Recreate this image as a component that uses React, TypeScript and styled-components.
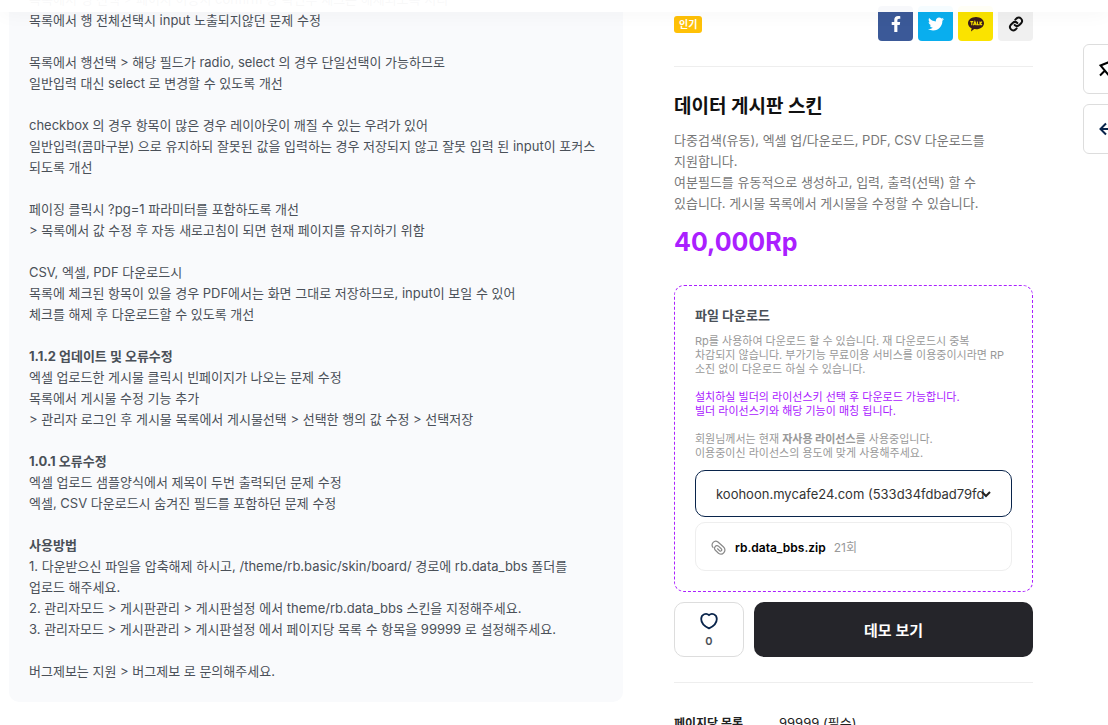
import React from "react";
import styled, { createGlobalStyle, css } from "styled-components";
import { FaFacebookF, FaTwitter } from "react-icons/fa";

const GlobalStyle = createGlobalStyle`
  * { box-sizing: border-box; }
  body {
    margin: 0;
    background: #fff;
    color: #4a5058;
    font-family: Inter, "Noto Sans CJK KR", sans-serif;
    font-size: 13px;
    line-height: 21px;
    overflow: hidden;
    word-break: keep-all;
  }
  button, select { font-family: inherit; }
  p, h1, h2, h3 { margin: 0; }
`;

const Header = styled.header`
  position: fixed;
  top: 0;
  left: 0;
  right: 0;
  height: 12px;
  z-index: 5;
  background: rgba(255, 255, 255, 0.96);
  box-shadow: 0 0 20px rgba(0, 0, 0, 0.05);
`;

const Page = styled.div`
  display: grid;
  grid-template-columns: 614fr 359fr;
  align-items: start;
  column-gap: 51px;
  margin-top: -11px;
  padding: 0 75px 0 9px;
`;

const Article = styled.article`
  background: #f9fafc;
  border-radius: 0 0 10px 10px;
  padding: 0 20px 20px;
`;

const Paragraph = styled.p`
  margin-bottom: 21px;
  &:last-child { margin-bottom: 0; }
`;

const Aside = styled.aside`
  padding-top: 17px;
`;

const TopRow = styled.div`
  display: flex;
  justify-content: space-between;
  align-items: flex-start;
  padding-bottom: 25px;
  border-bottom: 1px solid #eee;
`;

const Badge = styled.span`
  margin-top: 10px;
  padding: 0 5px;
  border-radius: 3px;
  background: #ffc107;
  color: #fff;
  font-size: 10px;
  font-weight: 600;
  line-height: 17px;
`;

const ShareList = styled.div`
  display: flex;
  gap: 5px;
`;

const ShareButton = styled.button<{ $bg: string; $color: string }>`
  display: flex;
  align-items: center;
  justify-content: center;
  width: 35px;
  height: 35px;
  padding: 0;
  border: 0;
  border-radius: 4px;
  background: ${(p) => p.$bg};
  color: ${(p) => p.$color};
`;

const Title = styled.h1`
  margin-top: 26px;
  color: #111;
  font-size: 19px;
  font-weight: 700;
  line-height: 28px;
`;

const Description = styled.p`
  margin-top: 9px;
  color: #777;
`;

const Price = styled.p`
  margin-top: 12px;
  color: #aa20ff;
  font-size: 25px;
  font-weight: 700;
  line-height: 32px;
`;

const DownloadBox = styled.section`
  margin-top: 27px;
  padding: 19px 20px 20px;
  border: 1px dashed #aa20ff;
  border-radius: 10px;
`;

const BoxTitle = styled.h2`
  font-size: 13px;
  font-weight: 700;
  line-height: 20px;
`;

const Note = styled.p<{ $accent?: boolean }>`
  margin-top: 14px;
  color: ${(p) => (p.$accent ? "#aa20ff" : "#999")};
  font-size: 11px;
  line-height: 14px;
  ${BoxTitle} + & { margin-top: 9px; }
`;

const SelectWrap = styled.div`
  position: relative;
  margin-top: 10px;
`;

const LicenseSelect = styled.select`
  display: block;
  width: 100%;
  height: 47px;
  padding: 0 20px;
  appearance: none;
  border: 1px solid #09244b;
  border-radius: 10px;
  background: #fff;
  color: #333;
  font-size: 13px;
`;

const SelectArrow = styled.svg`
  position: absolute;
  right: 20px;
  top: 18px;
  pointer-events: none;
`;

const FileLink = styled.a`
  display: flex;
  align-items: center;
  height: 49px;
  margin-top: 5px;
  padding: 2px 15px 0;
  border: 1px solid #eee;
  border-radius: 10px;
  color: #000;
  text-decoration: none;
`;

const FileName = styled.strong`
  margin: 0 8px 0 9px;
  font-size: 12px;
  font-weight: 600;
`;

const FileCount = styled.span`
  color: #999;
  font-size: 12px;
`;

const Actions = styled.div`
  display: grid;
  grid-template-columns: 70px 1fr;
  gap: 10px;
  margin-top: 10px;
  padding-bottom: 25px;
  border-bottom: 1px solid #eee;
`;

const actionButton = css`
  height: 55px;
  padding: 0;
  border-radius: 10px;
`;

const LikeButton = styled.button`
  ${actionButton}
  display: flex;
  flex-direction: column;
  align-items: center;
  justify-content: center;
  gap: 4px;
  border: 1px solid #ddd;
  background: #fff;
  color: #4a5058;
  font-size: 11px;
  font-weight: 600;
  line-height: 14px;
`;

const DemoButton = styled.button`
  ${actionButton}
  border: 0;
  background: #25252a;
  color: #fff;
  font-size: 15px;
  font-weight: 600;
`;

const Specs = styled.dl`
  display: grid;
  grid-template-columns: 95px 1fr;
  column-gap: 10px;
  margin: 30px 0 0;
  color: #222;
  dt { font-size: 12px; font-weight: 700; }
  dd { margin: 0; }
`;

const SideTools = styled.nav`
  position: fixed;
  top: 44px;
  right: -25px;
  z-index: 4;
  display: flex;
  flex-direction: column;
  gap: 10px;
`;

const SideButton = styled.button`
  display: flex;
  align-items: center;
  justify-content: center;
  width: 50px;
  height: 50px;
  padding: 0;
  border: 1px solid #ddd;
  border-radius: 6px;
  background: #fff;
`;

export default function App() {
  return (
    <>
      <GlobalStyle />
      <Header />
      <Page>
        <Article>
          <Paragraph>
            목록에서 행 선택 &gt; 페이지 이동시 confirm 창 확인후 체크는 해제되도록 처리<br />
            목록에서 행 전체선택시 input 노출되지않던 문제 수정
          </Paragraph>
          <Paragraph>
            목록에서 행선택 &gt; 해당 필드가 radio, select 의 경우 단일선택이 가능하므로<br />
            일반입력 대신 select 로 변경할 수 있도록 개선
          </Paragraph>
          <Paragraph>
            checkbox 의 경우 항목이 많은 경우 레이아웃이 깨질 수 있는 우려가 있어<br />
            일반입력(콤마구분) 으로 유지하되 잘못된 값을 입력하는 경우 저장되지 않고 잘못 입력 된 input이 포커스<br />
            되도록 개선
          </Paragraph>
          <Paragraph>
            페이징 클릭시 ?pg=1 파라미터를 포함하도록 개선<br />
            &gt; 목록에서 값 수정 후 자동 새로고침이 되면 현재 페이지를 유지하기 위함
          </Paragraph>
          <Paragraph>
            CSV, 엑셀, PDF 다운로드시<br />
            목록에 체크된 항목이 있을 경우 PDF에서는 화면 그대로 저장하므로, input이 보일 수 있어<br />
            체크를 해제 후 다운로드할 수 있도록 개선
          </Paragraph>
          <Paragraph>
            <b>1.1.2 업데이트 및 오류수정</b><br />
            엑셀 업로드한 게시물 클릭시 빈페이지가 나오는 문제 수정<br />
            목록에서 게시물 수정 기능 추가<br />
            &gt; 관리자 로그인 후 게시물 목록에서 게시물선택 &gt; 선택한 행의 값 수정 &gt; 선택저장
          </Paragraph>
          <Paragraph>
            <b>1.0.1 오류수정</b><br />
            엑셀 업로드 샘플양식에서 제목이 두번 출력되던 문제 수정<br />
            엑셀, CSV 다운로드시 숨겨진 필드를 포함하던 문제 수정
          </Paragraph>
          <Paragraph>
            <b>사용방법</b><br />
            1. 다운받으신 파일을 압축해제 하시고, /theme/rb.basic/skin/board/ 경로에 rb.data_bbs 폴더를<br />
            업로드 해주세요.<br />
            2. 관리자모드 &gt; 게시판관리 &gt; 게시판설정 에서 theme/rb.data_bbs 스킨을 지정해주세요.<br />
            3. 관리자모드 &gt; 게시판관리 &gt; 게시판설정 에서 페이지당 목록 수 항목을 99999 로 설정해주세요.
          </Paragraph>
          <Paragraph>버그제보는 지원 &gt; 버그제보 로 문의해주세요.</Paragraph>
        </Article>

        <Aside>
          <TopRow>
            <Badge>인기</Badge>
            <ShareList>
              <ShareButton $bg="#3b5998" $color="#fff" aria-label="Facebook">
                <FaFacebookF size={16} />
              </ShareButton>
              <ShareButton $bg="#09aeee" $color="#fff" aria-label="Twitter">
                <FaTwitter size={16} />
              </ShareButton>
              <ShareButton $bg="#fae300" $color="#391b1b" aria-label="KakaoTalk">
                <svg width="18" height="18" viewBox="0 0 18 18">
                  <path fill="currentColor" d="M9 2C4.500 2 1 4.800 1 8.200c0 2.200 1.500 4.100 3.600 5.100L4 16.500l3.200-2.400c.6.1 1.200.1 1.800.1 4.500 0 8-2.600 8-6S13.500 2 9 2z" />
                  <path fill="none" stroke="#fae300" strokeWidth="1.100" d="M3.300 6.600h3M4.800 6.600v3.600M6.500 10.200 7.900 6.600l1.400 3.600M7 9.200h1.800M10.400 6.400v3.400h1.800M13 6.400v3.800M15 6.600l-1.800 1.900 1.900 1.700" />
                </svg>
              </ShareButton>
              <ShareButton $bg="#f0f0f0" $color="#111" aria-label="링크 복사">
                <svg width="16" height="16" viewBox="0 0 24 24" fill="none" stroke="currentColor" strokeWidth="3" strokeLinecap="round">
                  <path d="M10 13.500a5 5 0 0 0 7 0l3-3a5 5 0 0 0-7-7l-2 2" />
                  <path d="M14 10.500a5 5 0 0 0-7 0l-3 3a5 5 0 0 0 7 7l2-2" />
                </svg>
              </ShareButton>
            </ShareList>
          </TopRow>

          <Title>데이터 게시판 스킨</Title>
          <Description>
            다중검색(유동), 엑셀 업/다운로드, PDF, CSV 다운로드를<br />
            지원합니다.<br />
            여분필드를 유동적으로 생성하고, 입력, 출력(선택) 할 수<br />
            있습니다. 게시물 목록에서 게시물을 수정할 수 있습니다.
          </Description>
          <Price>40,000Rp</Price>

          <DownloadBox>
            <BoxTitle>파일 다운로드</BoxTitle>
            <Note>
              Rp를 사용하여 다운로드 할 수 있습니다. 재 다운로드시 중복<br />
              차감되지 않습니다. 부가기능 무료이용 서비스를 이용중이시라면 RP<br />
              소진 없이 다운로드 하실 수 있습니다.
            </Note>
            <Note $accent>
              설치하실 빌더의 라이선스키 선택 후 다운로드 가능합니다.<br />
              빌더 라이선스키와 해당 기능이 매칭 됩니다.
            </Note>
            <Note>
              회원님께서는 현재 <b>자사용 라이선스</b>를 사용중입니다.<br />
              이용중이신 라이선스의 용도에 맞게 사용해주세요.
            </Note>
            <SelectWrap>
              <LicenseSelect aria-label="라이선스키 선택">
                <option>koohoon.mycafe24.com (533d34fdbad79fd</option>
              </LicenseSelect>
              <SelectArrow width="12" height="12" viewBox="0 0 12 12" fill="none" stroke="#222" strokeWidth="2">
                <path d="M2 4l4 4 4-4" />
              </SelectArrow>
            </SelectWrap>
            <FileLink href="#">
              <svg width="15" height="15" viewBox="0 0 15 15" fill="none" stroke="#888" strokeWidth="1.200" strokeLinecap="round" strokeLinejoin="round">
                <path d="M2 7.500C-.6 4.200 3.400-.8 7 2l5.300 4.800c4 3.800-.8 9.400-4.800 6.400L4.400 10.300C2 7.700 5.200 4.200 7.700 6.400l2.600 2.400c1.300 1.400-.4 3-1.700 1.900L6.500 8.800" />
              </svg>
              <FileName>rb.data_bbs.zip</FileName>
              <FileCount>21회</FileCount>
            </FileLink>
          </DownloadBox>

          <Actions>
            <LikeButton aria-label="좋아요 0">
              <svg width="18" height="18" viewBox="0 0 18 18" fill="none" stroke="#09244b" strokeWidth="1.800" strokeLinejoin="round">
                <path d="M9 3.200C6.500.6 1.200 2 1.200 7c0 4.700 4.800 8 7.800 9.400 3-1.400 7.800-4.700 7.800-9.400 0-5-5.300-6.400-7.800-3.800z" />
              </svg>
              0
            </LikeButton>
            <DemoButton>데모 보기</DemoButton>
          </Actions>

          <Specs>
            <dt>페이지당 목록</dt>
            <dd>99999 (필수)</dd>
          </Specs>
        </Aside>
      </Page>

      <SideTools>
        <SideButton aria-label="고정">
          <svg width="20" height="20" viewBox="0 0 20 20" fill="none" stroke="#000" strokeWidth="2">
            <path d="M2.500 6.500 10 3.500l4-3 5.500 6-3 4-3.500 8.500zM7 11.500l-5 5" />
          </svg>
        </SideButton>
        <SideButton aria-label="뒤로">
          <svg width="20" height="20" viewBox="0 0 20 20" fill="none" stroke="#09244b" strokeWidth="2">
            <path d="M8 4.500 2.500 10 8 15.500M2.500 10H19" />
          </svg>
        </SideButton>
      </SideTools>
    </>
  );
}
